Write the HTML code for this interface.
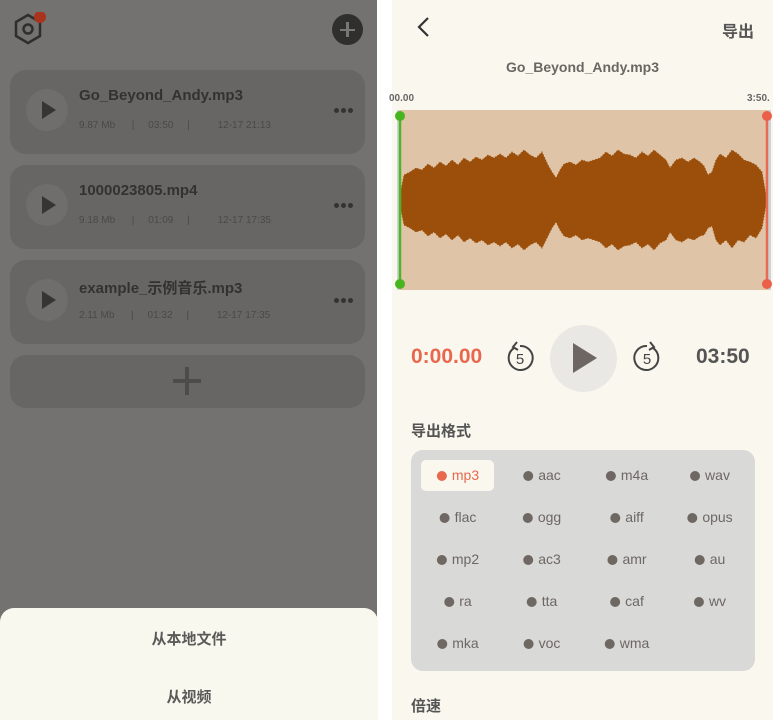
<!DOCTYPE html>
<html><head><meta charset="utf-8"><style>
*{margin:0;padding:0;box-sizing:border-box}
body{width:773px;height:720px;overflow:hidden;background:#fff;font-family:"Liberation Sans","Noto Sans CJK SC",sans-serif;position:relative}
.abs{position:absolute}
#left{left:0;top:0;width:377px;height:720px;background:#737270}
.card{position:absolute;left:10px;width:355px;background:#676665;border-radius:16px}
.pb{position:absolute;left:16px;top:19px;width:42px;height:42px;border-radius:50%;background:#6f6e6c}
.pb:after{content:"";position:absolute;left:16px;top:12px;border-left:14px solid #363534;border-top:9px solid transparent;border-bottom:9px solid transparent}
.ttl{position:absolute;left:69px;top:17px;font-size:15px;font-weight:bold;color:#333231}
.meta{position:absolute;left:69px;top:50px;font-size:10px;color:#4a4948;white-space:pre}
.dots{position:absolute;right:12px;top:38px;font-size:0}
.dots i{display:inline-block;width:5px;height:5px;border-radius:50%;background:#333;margin-left:2px}
#right{left:392px;top:0;width:381px;height:720px;background:#faf8ee}
.fmt{position:absolute;font-size:14px;color:#6d6762;transform:translateX(-50%);white-space:nowrap}
.fmt:before{content:"";display:inline-block;width:10px;height:10px;border-radius:50%;background:#6f6862;margin-right:5px;vertical-align:-1px}
.fmt.sel{color:#e8684f}
.fmt.sel:before{background:#e8684f}
</style></head><body>
<div id="left" class="abs">
  <svg class="abs" style="left:12px;top:12px" width="36" height="36" viewBox="0 0 36 36">
    <polygon points="16,3 28,10 28,24 16,31 4,24 4,10" fill="none" stroke="#2e2e2d" stroke-width="2.5"/>
    <circle cx="16" cy="17" r="4.5" fill="none" stroke="#2e2e2d" stroke-width="2.5"/>
    <circle cx="28" cy="5" r="6" fill="#a9331d"/>
  </svg>
  <div class="abs" style="left:332px;top:14px;width:31px;height:31px;border-radius:50%;background:#2f2f2e"></div>
  <div class="abs" style="left:340px;top:28.5px;width:15px;height:2.5px;background:#777"></div>
  <div class="abs" style="left:346.3px;top:22px;width:2.5px;height:15px;background:#777"></div>

  <div class="card" style="top:70px;height:84px"><div class="pb"></div><div class="ttl">Go_Beyond_Andy.mp3</div><div class="meta">9.87 Mb      |     03:50     |          12-17 21:13</div><div class="dots"><i></i><i></i><i></i></div></div>
  <div class="card" style="top:165px;height:84px"><div class="pb"></div><div class="ttl">1000023805.mp4</div><div class="meta">9.18 Mb      |     01:09     |          12-17 17:35</div><div class="dots"><i></i><i></i><i></i></div></div>
  <div class="card" style="top:260px;height:84px"><div class="pb"></div><div class="ttl">example_示例音乐.mp3</div><div class="meta">2.11 Mb      |     01:32     |          12-17 17:35</div><div class="dots"><i></i><i></i><i></i></div></div>
  <div class="card" style="top:355px;height:53px"><div class="abs" style="left:163px;top:24px;width:28px;height:4px;background:#4d4c4b"></div><div class="abs" style="left:175px;top:12px;width:4px;height:28px;background:#4d4c4b"></div></div>

  <div class="abs" style="left:0;top:608px;width:378px;height:112px;background:#f9f8ef;border-radius:14px 14px 0 0">
    <div class="abs" style="left:0;width:378px;top:20px;text-align:center;font-size:15px;font-weight:bold;color:#5c5a58">从本地文件</div>
    <div class="abs" style="left:0;width:378px;top:78px;text-align:center;font-size:15px;font-weight:bold;color:#5c5a58">从视频</div>
  </div>
</div>

<div id="right" class="abs">
  <svg class="abs" style="left:24px;top:16px" width="16" height="22"><polyline points="12,2 3,11 12,20" fill="none" stroke="#333" stroke-width="2.2"/></svg>
  <div class="abs" style="left:330px;top:18px;font-size:16px;font-weight:bold;color:#555">导出</div>
  <div class="abs" style="left:0;width:381px;top:59px;text-align:center;font-size:14px;font-weight:bold;color:#6a6663">Go_Beyond_Andy.mp3</div>
  <div class="abs" style="left:-3px;top:93px;font-size:10px;font-weight:bold;color:#666">00.00</div>
  <div class="abs" style="left:355px;top:93px;font-size:10px;font-weight:bold;color:#666">3:50.</div>
</div>

<svg class="abs" style="left:392px;top:105px" width="381" height="190" viewBox="392 105 381 190">
  <rect x="397" y="110" width="374" height="180" fill="#cfd2d4"/>
  <rect x="400" y="110" width="368" height="180" fill="#dfc4a8"/>
  <polygon fill="#9b4f0a" stroke="#9b4f0a" stroke-width="1" stroke-dasharray="1 2" points="400,195 404,175 410,172 416,168 422,170 428,164 434,168 440,162 446,166 452,160 458,165 464,158 470,162 476,157 482,160 488,155 494,158 500,154 506,158 512,152 518,156 524,150 530,155 536,158 542,152 548,165 552,172 556,178 560,170 564,164 570,162 576,165 582,160 588,162 594,160 600,158 606,152 612,156 618,150 624,154 630,155 636,158 642,152 648,156 654,150 660,155 666,160 670,168 676,160 682,158 688,162 694,158 700,162 704,166 708,175 712,172 716,160 720,154 726,158 732,150 738,154 744,160 750,162 756,165 762,172 766,195
  766,205 762,228 756,238 750,235 744,242 738,240 732,248 726,240 720,245 716,240 712,226 708,228 704,235 700,236 694,240 688,238 682,242 676,240 670,232 666,240 660,243 654,250 648,244 642,248 636,242 630,245 624,246 618,250 612,244 606,248 600,242 594,240 588,238 582,240 576,235 570,238 564,236 560,230 556,222 552,228 548,236 542,248 536,242 530,245 524,250 518,244 512,248 506,242 500,246 494,242 488,245 482,240 476,243 470,238 464,242 458,235 452,240 446,234 440,238 434,232 428,236 422,230 416,232 410,228 404,225 400,205"/>
  <line x1="400" y1="116" x2="400" y2="284" stroke="#4fb42a" stroke-width="2.5"/>
  <circle cx="400" cy="116" r="5" fill="#46b51f"/><circle cx="400" cy="284" r="5" fill="#46b51f"/>
  <line x1="767" y1="116" x2="767" y2="284" stroke="#e86a53" stroke-width="2.5"/>
  <circle cx="767" cy="116" r="5" fill="#ea6048"/><circle cx="767" cy="284" r="5" fill="#ea6048"/>
</svg>

<div class="abs" style="left:411px;top:345px;font-size:21px;font-weight:bold;color:#e8684f">0:00.00</div>
<svg class="abs" style="left:503px;top:341px" width="34" height="34" viewBox="0 0 34 34">
  <path d="M11 7 A12 12 0 1 0 17 5" fill="none" stroke="#444" stroke-width="2"/>
  <polyline points="14,1 10,6 15,9" fill="none" stroke="#444" stroke-width="2"/>
  <text x="17" y="23" font-size="15" text-anchor="middle" fill="#444" font-family="Liberation Sans">5</text>
</svg>
<div class="abs" style="left:550px;top:325px;width:67px;height:67px;border-radius:50%;background:#e9e8e4"></div>
<div class="abs" style="left:573px;top:343px;border-left:24px solid #6d6662;border-top:15px solid transparent;border-bottom:15px solid transparent"></div>
<svg class="abs" style="left:630px;top:341px" width="34" height="34" viewBox="0 0 34 34">
  <path d="M23 7 A12 12 0 1 1 17 5" fill="none" stroke="#444" stroke-width="2"/>
  <polyline points="20,1 24,6 19,9" fill="none" stroke="#444" stroke-width="2"/>
  <text x="17" y="23" font-size="15" text-anchor="middle" fill="#444" font-family="Liberation Sans">5</text>
</svg>
<div class="abs" style="left:696px;top:345px;font-size:21px;font-weight:bold;color:#555">03:50</div>

<div class="abs" style="left:411px;top:420px;font-size:15px;font-weight:bold;color:#555">导出格式</div>
<div class="abs" style="left:411px;top:450px;width:344px;height:221px;background:#d9d9d8;border-radius:12px"></div>
<div class="abs" style="left:421px;top:460px;width:73px;height:31px;background:#faf8ee;border-radius:5px"></div>
<div class="fmt sel" style="left:458px;top:467px">mp3</div>
<div class="fmt" style="left:542px;top:467px">aac</div>
<div class="fmt" style="left:627px;top:467px">m4a</div>
<div class="fmt" style="left:710px;top:467px">wav</div>
<div class="fmt" style="left:458px;top:509px">flac</div>
<div class="fmt" style="left:542px;top:509px">ogg</div>
<div class="fmt" style="left:627px;top:509px">aiff</div>
<div class="fmt" style="left:710px;top:509px">opus</div>
<div class="fmt" style="left:458px;top:551px">mp2</div>
<div class="fmt" style="left:542px;top:551px">ac3</div>
<div class="fmt" style="left:627px;top:551px">amr</div>
<div class="fmt" style="left:710px;top:551px">au</div>
<div class="fmt" style="left:458px;top:593px">ra</div>
<div class="fmt" style="left:542px;top:593px">tta</div>
<div class="fmt" style="left:627px;top:593px">caf</div>
<div class="fmt" style="left:710px;top:593px">wv</div>
<div class="fmt" style="left:458px;top:635px">mka</div>
<div class="fmt" style="left:542px;top:635px">voc</div>
<div class="fmt" style="left:627px;top:635px">wma</div>
<div class="abs" style="left:411px;top:695px;font-size:15px;font-weight:bold;color:#555">倍速</div>
</body></html>
